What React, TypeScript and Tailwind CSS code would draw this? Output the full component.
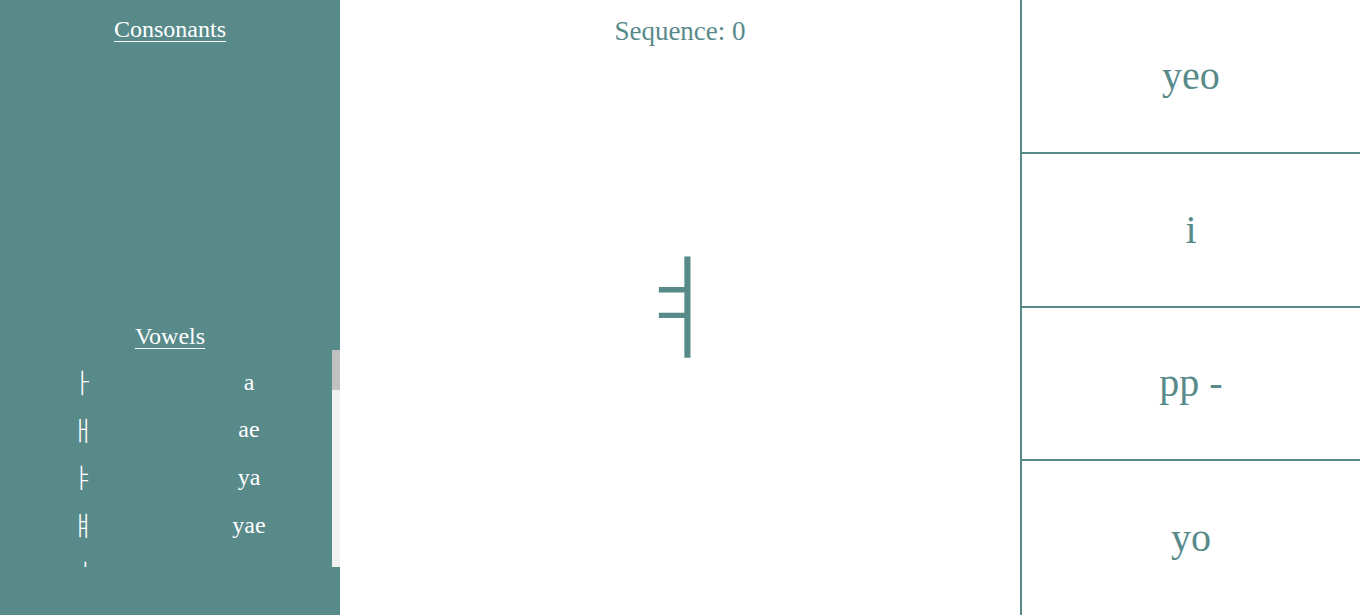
import React from "react";

const vowels: [string, string][] = [
  ["ㅏ", "a"],
  ["ㅐ", "ae"],
  ["ㅑ", "ya"],
  ["ㅒ", "yae"],
  ["ㅓ", "eo"],
  ["ㅔ", "e"],
  ["ㅕ", "yeo"],
  ["ㅖ", "ye"],
  ["ㅗ", "o"],
  ["ㅘ", "wa"],
];

const choices = ["yeo", "i", "pp -", "yo"];

export default function App() {
  return (
    <div className="flex h-[615px] w-[1360px] overflow-hidden bg-white font-['Liberation_Serif','Noto_Sans_CJK_KR',serif]">
      {/* Left panel */}
      <div className="flex w-[340px] shrink-0 flex-col bg-[#588a8a] text-white">
        <div className="flex h-[307.5px] flex-col items-center">
          <h2 className="mt-[15px] text-[24px] leading-[28px] underline underline-offset-[4px] decoration-1">
            Consonants
          </h2>
        </div>
        <div className="flex h-[307.5px] flex-col">
          <h2 className="mt-[14px] self-center text-[24px] leading-[28px] underline underline-offset-[4px] decoration-1">
            Vowels
          </h2>
          <div className="flex h-[217px]">
            <div className="h-full w-[332px] overflow-hidden pt-[8.5px]">
              {vowels.map(([k, r]) => (
                <div key={r} className="grid h-[47.6px] grid-cols-2 items-center text-[24px] leading-none">
                  <span className="text-center font-['Noto_Sans_CJK_KR',sans-serif] text-[27px] font-light">{k}</span>
                  <span className="text-center">{r}</span>
                </div>
              ))}
            </div>
            <div className="flex h-full w-[8px] flex-col bg-[#f1f1f1]">
              <div className="h-[40px] w-full bg-[#c1c1c1]" />
            </div>
          </div>
        </div>
      </div>

      {/* Center */}
      <div className="flex flex-1 flex-col text-[#588a8a]">
        <div className="flex h-[60px] items-start justify-center pt-[15px]">
          <span className="text-[27px] leading-[32px]">Sequence: 0</span>
        </div>
        <div className="flex flex-1 items-center justify-center pb-[76px] pr-[6px]">
          <span className="font-['Noto_Sans_CJK_KR',sans-serif] text-[115px] font-light leading-none">
            ㅕ
          </span>
        </div>
      </div>

      {/* Right column */}
      <div className="flex w-[340px] shrink-0 flex-col border-l-2 border-[#588a8a]">
        {choices.map((c, i) => (
          <button
            key={c}
            className={
              i < choices.length - 1
                ? "flex h-[153.75px] shrink-0 items-center justify-center border-b-2 border-[#588a8a] bg-white text-[40px] leading-none text-[#588a8a]"
                : "flex h-[153.75px] shrink-0 items-center justify-center bg-white text-[40px] leading-none text-[#588a8a]"
            }
          >
            {c}
          </button>
        ))}
      </div>
    </div>
  );
}
